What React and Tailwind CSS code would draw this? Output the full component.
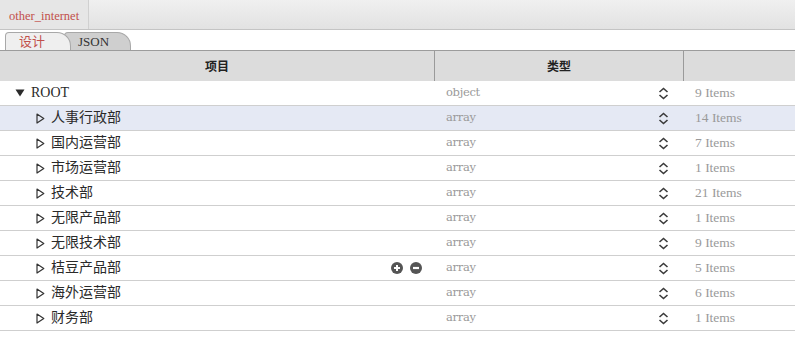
import React from "react";

const rows = [
  { name: "人事行政部", count: "14 Items", selected: true },
  { name: "国内运营部", count: "7 Items" },
  { name: "市场运营部", count: "1 Items" },
  { name: "技术部", count: "21 Items" },
  { name: "无限产品部", count: "1 Items" },
  { name: "无限技术部", count: "9 Items" },
  { name: "桔豆产品部", count: "5 Items", actions: true },
  { name: "海外运营部", count: "6 Items" },
  { name: "财务部", count: "1 Items" },
];

const SERIF = "font-['Liberation_Serif','Noto_Sans_CJK_SC',serif]";

function UpDown() {
  return (
    <svg width="11" height="13" viewBox="0 0 11 13" className="shrink-0">
      <path d="M1.5 5 L5.5 1.5 L9.5 5" fill="none" stroke="#3a3a3a" strokeWidth="1.6" />
      <path d="M1.5 8 L5.5 11.5 L9.5 8" fill="none" stroke="#3a3a3a" strokeWidth="1.6" />
    </svg>
  );
}

function RightTri() {
  return (
    <svg width="9" height="11" viewBox="0 0 9 11" className="shrink-0">
      <path d="M1 1 L7.8 5.5 L1 10 Z" fill="none" stroke="#333" strokeWidth="1.2" strokeLinejoin="round" />
    </svg>
  );
}

function DownTri() {
  return (
    <svg width="10" height="8" viewBox="0 0 10 8" className="shrink-0">
      <path d="M0.5 0.5 L9.5 0.5 L5 7.5 Z" fill="#2b2b2b" />
    </svg>
  );
}

function Plus() {
  return (
    <svg width="12" height="12" viewBox="0 0 12 12">
      <circle cx="6" cy="6" r="6" fill="#555" />
      <path d="M6 3 V9 M3 6 H9" stroke="#fff" strokeWidth="2" />
    </svg>
  );
}

function Minus() {
  return (
    <svg width="12" height="12" viewBox="0 0 12 12">
      <circle cx="6" cy="6" r="6" fill="#555" />
      <path d="M3 6 H9" stroke="#fff" strokeWidth="2.2" />
    </svg>
  );
}

function Row({ indent, icon, name, type, count, selected, actions }) {
  return (
    <div
      className={`grid grid-cols-[435px_249px_111px] h-[25px] border-b border-[#cfcfcf] ${
        selected ? "bg-[#e5e9f4]" : "bg-white"
      }`}
    >
      <div className={`flex items-center ${indent ? "pl-[36px]" : "pl-[15px]"}`}>
        {icon}
        <span className="ml-[6px] text-[14px] text-[#2a2a2a] leading-none">{name}</span>
        {actions && (
          <div className="ml-auto mr-[13px] flex items-center gap-[7px]">
            <Plus />
            <Minus />
          </div>
        )}
      </div>
      <div className="flex items-center pl-[11px] pr-[15px]">
        <span className="text-[11.5px] text-[#9a9a9a] font-['DejaVu_Serif',serif] tracking-[-0.3px]">
          {type}
        </span>
        <span className="ml-auto">
          <UpDown />
        </span>
      </div>
      <div className="flex items-center pl-[11px]">
        <span className="text-[13.5px] text-[#9a9a9a]">{count}</span>
      </div>
    </div>
  );
}

export default function App() {
  return (
    <div className={`w-[795px] h-[364px] bg-white overflow-hidden ${SERIF}`}>
      {/* top bar */}
      <div className="h-[30px] flex bg-gradient-to-b from-[#f0f0f0] to-[#e2e2e2] border-b border-[#c4c4c4]">
        <div className="w-[89px] h-full bg-[#e6e6e6] border-r border-[#d0d0d0] flex items-center pl-[9px] pt-[3px]">
          <span className="text-[12.5px] text-[#c2504b]">other_internet</span>
        </div>
      </div>
      {/* tabs */}
      <div className="h-[21px] flex items-end pl-[5px] border-b border-[#9c9c9c] bg-white">
        <div className="relative flex items-end h-[18px]">
          <div className="relative z-10 w-[66px] h-full bg-[#efefef] border border-b-0 border-[#a8a8a8] rounded-tl-[4px] rounded-tr-[14px] flex items-center pl-[13px]">
            <span className="text-[13px] text-[#c2504b] leading-none">设计</span>
          </div>
          <div className="-ml-[7px] w-[67px] h-full bg-[#cfcfcf] border border-b-0 border-[#a8a8a8] rounded-tl-[4px] rounded-tr-[14px] flex items-center pl-[13px]">
            <span className="text-[13px] text-[#333] leading-none">JSON</span>
          </div>
        </div>
      </div>
      {/* header */}
      <div className="grid grid-cols-[435px_249px_111px] h-[30px] bg-[#dcdcdc]">
        <div className="flex items-center justify-center border-r border-[#9a9a9a]">
          <span className="text-[12px] text-[#222] font-bold font-['Noto_Sans_CJK_SC',sans-serif]">项目</span>
        </div>
        <div className="flex items-center justify-center border-r border-[#9a9a9a]">
          <span className="text-[12px] text-[#222] font-bold font-['Noto_Sans_CJK_SC',sans-serif]">类型</span>
        </div>
        <div />
      </div>
      {/* rows */}
      <Row icon={<DownTri />} name="ROOT" type="object" count="9 Items" />
      {rows.map((r) => (
        <Row
          key={r.name}
          indent
          icon={<RightTri />}
          name={r.name}
          type="array"
          count={r.count}
          selected={r.selected}
          actions={r.actions}
        />
      ))}
    </div>
  );
}
